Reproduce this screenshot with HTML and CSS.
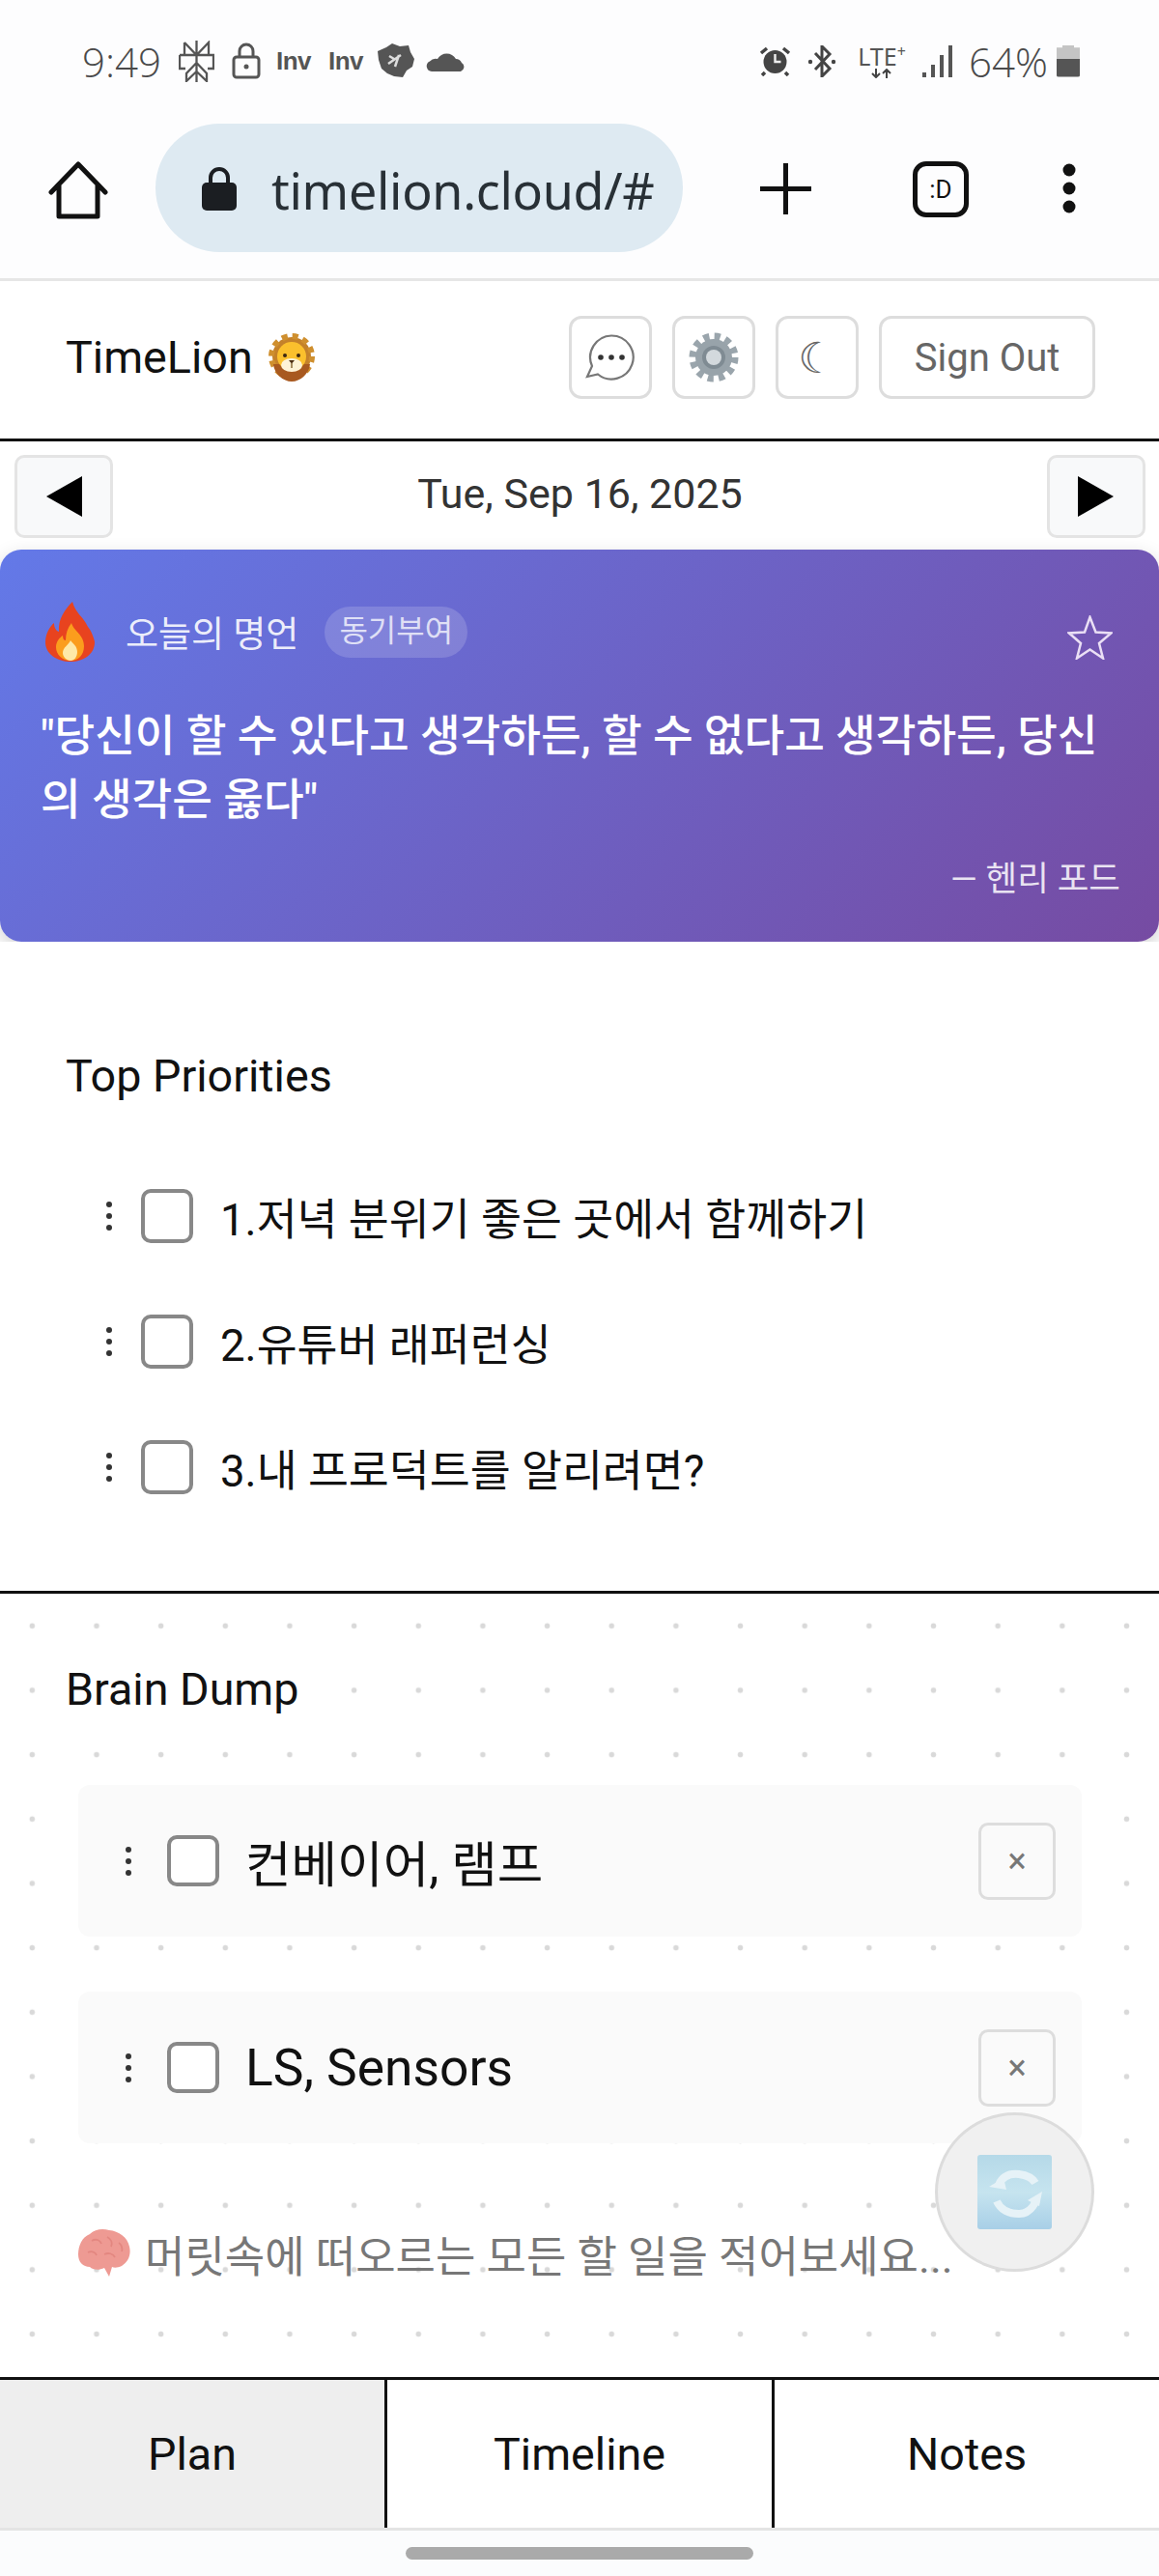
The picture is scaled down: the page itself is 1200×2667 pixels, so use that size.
FILE: index.html
```html
<!DOCTYPE html>
<html lang="ko">
<head>
<meta charset="utf-8">
<title>TimeLion</title>
<link rel="stylesheet" href="styles.css">
</head>
<body>
<div class="chrome">
  <div class="status">
    <div class="status-left">
      <span class="time">9:49</span>
      <svg class="ic-perp" viewBox="0 0 37 43"><path d="M18.500 0V43M6 2l12.500 13L31 2V15M6 2V15M1 15h35v14h-6M1 15v14h6M18.500 23L8 34v8l10.500-10M18.500 23L29 34v8L18.500 32" fill="none" stroke="#555" stroke-width="2.300"/></svg>
      <svg class="ic-lock" viewBox="0 0 30 38"><path d="M8 15V9a7 7 0 0 1 14 0v6" fill="none" stroke="#555" stroke-width="3"/><rect x="2" y="15" width="26" height="21" rx="3" fill="none" stroke="#555" stroke-width="3"/><circle cx="15" cy="25" r="2.500" fill="#555"/></svg>
      <span class="inv">Inv</span>
      <span class="inv">Inv</span>
      <svg class="ic-globe" viewBox="0 0 40 36"><path d="M2 8l9-4 6-4 8 3 9-1 2 7 4 7-2 8-6 4-4 7-9-1-7-3-6-5-3-9z" fill="#555"/><path d="M13 21l13-9M24 12l-4 12M14 13l5 3" stroke="#ddd" stroke-width="2.500" fill="none"/></svg>
      <svg class="ic-cloud" viewBox="0 0 41 22"><path d="M6 22a5.500 5.500 0 0 1-2-10.500 8 8 0 0 1 8-2.500 11 11 0 0 1 19 0 7 7 0 0 1 6 4 5 5 0 0 1-1 9z" fill="#555"/></svg>
    </div>
    <div class="status-right">
      <svg class="ic-alarm" viewBox="0 0 33 31"><circle cx="16.500" cy="16" r="12" fill="#444"/><path d="M16.500 8v8h6" stroke="#eee" stroke-width="2.400" fill="none"/><path d="M2 7l6-5M31 7l-6-5M6 27l-3 3M27 27l3 3" stroke="#444" stroke-width="3.500"/></svg>
      <svg class="ic-bt" viewBox="0 0 30 33"><path d="M8 8l15 16-8 8V1l8 8L8 25" fill="none" stroke="#444" stroke-width="3"/><circle cx="3" cy="17" r="2.200" fill="#444"/><circle cx="27" cy="17" r="2.200" fill="#444"/></svg>
      <span class="lte"><span class="lte-top">LTE<sup class="lte-plus">+</sup></span><svg class="ic-arrows" viewBox="0 0 24 10"><path d="M6 0v9M2 5l4 4 4-4M17 10V1M13 5l4-4 4 4" stroke="#444" stroke-width="2" fill="none"/></svg></span>
      <svg class="ic-signal" viewBox="0 0 32 33"><rect x="0" y="28" width="4" height="5" fill="#555"/><rect x="9" y="20" width="4" height="13" fill="#555"/><rect x="18" y="10" width="4" height="23" fill="#555"/><rect x="27" y="0" width="4" height="33" fill="#555"/></svg>
      <span class="pct">64%</span>
      <span class="battery"></span>
    </div>
  </div>
  <div class="urlbar">
    <svg class="ic-home" viewBox="0 0 62 60"><path d="M3 32L31 3l28 29M11 25v32h40V25" fill="none" stroke="#111" stroke-width="5" stroke-linejoin="round" stroke-linecap="round"/></svg>
    <div class="pill">
      <svg class="ic-urllock" viewBox="0 0 38 46"><path d="M10 19v-7a9 9 0 0 1 18 0v7" fill="none" stroke="#1b1e22" stroke-width="4"/><rect x="1" y="17" width="36" height="29" rx="5" fill="#1b1e22"/></svg>
      <span class="url">timelion.cloud/#</span>
    </div>
    <svg class="ic-plus" viewBox="0 0 53 53"><path d="M26.500 0v53M0 26.500h53" stroke="#111" stroke-width="5"/></svg>
    <span class="tabcount">:D</span>
    <svg class="ic-more" viewBox="0 0 14 52"><circle cx="7" cy="7" r="6.500" fill="#111"/><circle cx="7" cy="26" r="6.500" fill="#111"/><circle cx="7" cy="45" r="6.500" fill="#111"/></svg>
  </div>
</div>

<header class="app-header">
  <div class="brand">TimeLion
    <svg class="ic-lion" viewBox="0 0 48 52"><circle cx="24" cy="25" r="20" fill="#c4812a"/><circle cx="24" cy="25" r="21" fill="none" stroke="#cf8f2e" stroke-width="6" stroke-dasharray="6 5"/><path d="M5 33c1 10 10 18 19 18s18-8 19-18z" fill="#a8591f"/><ellipse cx="24" cy="25" rx="15" ry="15" fill="#fbc02d"/><ellipse cx="24" cy="34" rx="11" ry="7" fill="#fff3d6"/><circle cx="17" cy="24" r="2" fill="#3d2610"/><circle cx="31" cy="24" r="2" fill="#3d2610"/><path d="M21 29h6l-3 3.500z" fill="#4a2c10"/><path d="M24 32v5" stroke="#8a6a3a" stroke-width="1.500"/></svg>
  </div>
  <div class="header-actions">
    <button class="hbtn"><svg class="ic-chat" viewBox="0 0 52 48"><path d="M27 1.500a22.500 22.500 0 1 1-14 40L2 44l5-11A22.500 22.500 0 0 1 27 1.500z" fill="#fff" stroke="#777" stroke-width="2.200"/><circle cx="16" cy="24" r="2.800" fill="#333"/><circle cx="27" cy="24" r="2.800" fill="#333"/><circle cx="38" cy="24" r="2.800" fill="#333"/></svg></button>
    <button class="hbtn"><svg class="ic-gear" viewBox="0 0 52 52"><circle cx="26" cy="26" r="21.500" fill="none" stroke="#9aa5ac" stroke-width="8" stroke-dasharray="6 5.260"/><circle cx="26" cy="26" r="19" fill="#98a3aa"/><circle cx="26" cy="26" r="12" fill="#7f8b93"/><circle cx="26" cy="26" r="8" fill="#d3d9dd"/></svg></button>
    <button class="hbtn moon">☾</button>
    <button class="hbtn signout">Sign Out</button>
  </div>
</header>

<nav class="datenav">
  <button class="navbtn"><svg class="tri" viewBox="0 0 37 42"><path d="M37 0v42L0 21z" fill="#000"/></svg></button>
  <span class="date">Tue, Sep 16, 2025</span>
  <button class="navbtn"><svg class="tri" viewBox="0 0 37 42"><path d="M0 0v42l37-21z" fill="#000"/></svg></button>
</nav>

<section class="quote">
  <div class="quote-head">
    <svg class="ic-flame" viewBox="0 0 51 62"><path d="M28 0c3 12 11 15 16 26 3 3 7 13 7 16 0 12-11 20-25 20S0 54 0 42c0-9 5-17 9-20 0 5 2 8 5 9C13 18 20 8 28 0z" fill="#e8431f"/><path d="M27 22c2 8 13 12 13 24 0 9-6 15-14 15s-15-6-15-14c0-6 4-10 7-12 0 3 1 5 3 5 0-7 2-13 6-18z" fill="#fb9d1d"/><path d="M26 40c3 4 7 6 7 12 0 5-3 9-7 9s-8-4-8-8c0-6 6-8 8-13z" fill="#fee9a8"/></svg>
    <span class="quote-label">오늘의 명언</span>
    <span class="quote-badge">동기부여</span>
    <svg class="ic-star" viewBox="0 0 47 46"><path d="M23.500 2l6 15.500 16 1-12.500 10.500 4 15.500-13.500-9-13.500 9 4-15.500L2 18.500l16-1z" fill="none" stroke="#eadff5" stroke-width="2.500"/></svg>
  </div>
  <p class="quote-text">"당신이 할 수 있다고 생각하든, 할 수 없다고 생각하든, 당신의 생각은 옳다"</p>
  <p class="quote-author">— 헨리 포드</p>
</section>

<section class="priorities">
  <h2 class="section-title">Top Priorities</h2>
  <ul class="prio-list">
    <li class="prio"><span class="grip"><i></i><i></i><i></i></span><span class="check"></span><span>1.저녁 분위기 좋은 곳에서 함께하기</span></li>
    <li class="prio"><span class="grip"><i></i><i></i><i></i></span><span class="check"></span><span>2.유튜버 래퍼런싱</span></li>
    <li class="prio"><span class="grip"><i></i><i></i><i></i></span><span class="check"></span><span>3.내 프로덕트를 알리려면?</span></li>
  </ul>
</section>

<section class="dump">
  <h2 class="section-title dump-title">Brain Dump</h2>
  <div class="dump-list">
    <div class="dump-item"><span class="grip"><i></i><i></i><i></i></span><span class="check"></span><span class="dump-text ko">컨베이어, 램프</span><button class="xbtn">×</button></div>
    <div class="dump-item"><span class="grip"><i></i><i></i><i></i></span><span class="check"></span><span class="dump-text">LS, Sensors</span><button class="xbtn">×</button></div>
  </div>
  <div class="dump-input">
    <svg class="ic-brain" viewBox="0 0 54 50"><path d="M12 5c5-5 13-6 20-4 10 1 19 7 21 17 2 8-1 16-8 20-4 2-8 2-10 1l-3 10-5-9c-6 3-12 2-15-1-7 0-12-5-12-13C0 17 4 8 12 5z" fill="#ee9a93"/><path d="M14 12c5-3 9 0 10 3M30 8c4 2 6 6 4 10M10 24c4-2 8 0 9 3M27 26c4-2 9-1 11 3M42 14c3 2 4 6 3 9" stroke="#e38780" stroke-width="1.800" fill="none"/></svg>
    <span>머릿속에 떠오르는 모든 할 일을 적어보세요...</span>
  </div>
  <button class="fab"><svg class="ic-refresh" viewBox="0 0 77 77"><defs><linearGradient id="rg" x1="0" y1="0" x2="0" y2="1"><stop offset="0" stop-color="#b5d9e8"/><stop offset=".5" stop-color="#c6e4ef"/><stop offset="1" stop-color="#a8cfe7"/></linearGradient></defs><rect width="77" height="77" rx="3" fill="url(#rg)"/><path d="M22 31c4-9 12-12 21-11 8 1 14 4 17 9" fill="none" stroke="#e6f2f7" stroke-width="8"/><path d="M12 33l15-9 3 12z" fill="#e6f2f7"/><path d="M20 48c4 9 13 13 23 13 9 0 14-5 18-14" fill="none" stroke="#e6f2f7" stroke-width="8"/><path d="M67 38l-3 15-12-6z" fill="#e6f2f7"/></svg></button>
</section>

<nav class="tabs">
  <button class="tab active">Plan</button>
  <button class="tab">Timeline</button>
  <button class="tab">Notes</button>
</nav>
<div class="gesture"><span class="gesture-bar"></span></div>
</body>
</html>
```
FILE: styles.css
```css
* { box-sizing: border-box; }
html, body { margin: 0; padding: 0; }
body {
  width: 1200px; height: 2667px; overflow: hidden; background: #fff; color: #111;
  font-family: Roboto, "Noto Sans CJK KR", sans-serif;
}
button { font-family: inherit; padding: 0; margin: 0; }
h2, p, ul { margin: 0; padding: 0; }

.chrome { height: 291px; background: #fdfdfe; border-bottom: 3px solid #e6e6e6; }
.status { height: 128px; display: flex; justify-content: space-between; padding: 38px 82px 0 85px; color: #555; }
.status-left, .status-right { display: flex; align-items: center; height: 50px; }
.time { font: 300 42px "Open Sans", sans-serif; width: 100px; color: #4a4a4a; }
.ic-perp { width: 37px; height: 43px; }
.ic-lock { width: 30px; height: 38px; margin-left: 18px; }
.inv { font: 700 26px "Liberation Sans", sans-serif; letter-spacing: -.5px; margin-left: 16px; width: 38px; color: #555; }
.ic-globe { width: 40px; height: 36px; margin-left: 11px; }
.ic-cloud { width: 41px; height: 22px; margin-left: 12px; }
.ic-alarm { width: 33px; height: 31px; }
.ic-bt { width: 30px; height: 33px; margin-left: 17px; }
.lte { display: flex; flex-direction: column; align-items: center; margin-left: 18px; width: 58px; }
.lte-top { font: 400 25px/25px "Noto Sans", sans-serif; color: #555; }
.lte-plus { font-size: 16px; line-height: 0; }
.ic-arrows { width: 24px; height: 10px; }
.ic-signal { width: 32px; height: 33px; margin-left: 13px; }
.pct { font: 300 42px "Open Sans", sans-serif; margin-left: 16px; color: #4a4a4a; width: 84px; white-space: nowrap; }
.battery { width: 24px; height: 33px; margin-left: 7px; border-radius: 2px; background: linear-gradient(#c4c4c4 0 43%, #555 43%); clip-path: polygon(25% 0, 75% 0, 75% 8%, 100% 8%, 100% 100%, 0 100%, 0 8%, 25% 8%); }

.urlbar { height: 160px; display: flex; align-items: flex-start; padding-left: 50px; }
.ic-home { width: 62px; height: 60px; margin-top: 39px; }
.pill { width: 546px; height: 133px; margin-left: 49px; background: #deeaf2; border-radius: 67px; display: flex; align-items: center; padding-left: 47px; }
.ic-urllock { width: 38px; height: 46px; }
.url { font: 400 52px "Noto Sans", sans-serif; color: #283036; margin-left: 35px; padding-top: 4px; letter-spacing: -.3px; white-space: nowrap; }
.ic-plus { width: 53px; height: 53px; margin-left: 80px; margin-top: 41px; }
.tabcount { width: 58px; height: 58px; margin-left: 105px; margin-top: 39px; border: 5px solid #111; border-radius: 14px; display: flex; align-items: center; justify-content: center; font: 400 26px Roboto, sans-serif; color: #111; }
.ic-more { width: 14px; height: 52px; margin-left: 97px; margin-top: 41px; }

.app-header { height: 166px; border-bottom: 3px solid #111; background: #fff; display: flex; justify-content: space-between; align-items: center; padding: 0 66px 5px 68px; }
.brand { font-size: 46.670px; display: flex; align-items: center; gap: 16px; color: #111; }
.ic-lion { width: 48px; height: 52px; }
.header-actions { display: flex; gap: 21px; }
.hbtn { width: 86px; height: 86px; border: 3px solid #ddd; border-radius: 13px; background: #fff; display: flex; align-items: center; justify-content: center; color: #666; font-size: 40px; }
.signout { width: 224px; font-size: 40px; color: #666; }
.moon { font-family: "DejaVu Sans", sans-serif; font-size: 44px; }
.ic-chat { width: 52px; height: 48px; }
.ic-gear { width: 52px; height: 52px; }

.datenav { height: 112px; display: flex; justify-content: space-between; align-items: flex-start; padding: 14px 14px 0 15px; background: #fff; }
.navbtn { width: 102px; height: 86px; background: #f8f9fa; border: 3px solid #e4e4e4; border-radius: 10px; display: flex; align-items: center; justify-content: center; }
.tri { width: 37px; height: 42px; }
.date { font-size: 43px; line-height: 80px; color: #333; }

.quote { height: 406px; border-radius: 22px; background: linear-gradient(135deg, #6379e8, #764ba2); color: #fff; padding: 54px 42px 0; box-shadow: 0 7px 20px rgba(0,0,0,.18); }
.quote-head { display: flex; align-items: center; height: 62px; }
.ic-flame { width: 51px; height: 62px; margin-left: 5px; }
.quote-label { font-size: 37px; margin-left: 32px; color: rgba(255,255,255,.9); }
.quote-badge { margin-left: 27px; height: 53px; padding: 0 15px; border-radius: 27px; background: rgba(255,255,255,.16); font-size: 32px; line-height: 51px; color: rgba(255,255,255,.75); }
.ic-star { width: 47px; height: 46px; margin-left: auto; margin-right: 6px; margin-top: 12px; }
.quote-text { font-size: 45.300px; font-weight: 500; line-height: 66px; margin-top: 45px; }
.quote-author { text-align: right; font-size: 35.500px; margin-top: 19px; margin-right: -2px; color: rgba(255,255,255,.85); }

.priorities { height: 675px; padding: 104px 0 0 68px; background: #fff; border-bottom: 3px solid #111; }
.section-title { font-size: 46.670px; font-weight: 400; line-height: 70px; color: #111; }
.prio-list { list-style: none; margin: 45px 0 0 25px; }
.prio { display: flex; align-items: center; height: 130px; font-size: 45.600px; color: #111; }
.grip { display: flex; flex-direction: column; gap: 6px; width: 40px; align-items: center; }
.prio .grip { margin-right: 13px; }
.grip i { width: 6px; height: 6px; border-radius: 50%; background: #333; }
.check { width: 54px; height: 56px; border: 4px solid #888; border-radius: 10px; background: #fff; flex: none; margin-right: 28px; }

.dump { height: 811px; position: relative; padding-top: 64px; background: #fff radial-gradient(circle at center, #d9d9d9 0 2.500px, transparent 3.200px) 0 0 / 66.667px 66.667px; }
.dump-title { background: #fff; margin-left: 44px; padding-left: 24px; width: 300px; }
.dump-list { margin: 64px 80px 0 81px; display: flex; flex-direction: column; gap: 57px; }
.dump-item { height: 157px; background: #fafafa; border-radius: 12px; display: flex; align-items: center; padding-left: 32px; }
.dump-item .check { height: 53px; margin-left: 20px; margin-right: 27px; }
.dump-text { font-size: 53.330px; flex: 1; color: #111; }
.dump-text.ko { font-size: 51.700px; }
.xbtn { width: 80px; height: 80px; border: 3px solid #ddd; border-radius: 10px; background: #fafafa; color: #777; font-size: 36px; margin-right: 27px; }
.dump-input { margin: 89px 0 0 81px; display: flex; align-items: center; gap: 15px; font-size: 45px; color: #777; height: 50px; }
.ic-brain { width: 54px; height: 50px; }
.fab { position: absolute; left: 968px; top: 537px; width: 165px; height: 165px; border-radius: 50%; background: #f0f0f0; border: 3px solid #dcdcdc; display: flex; align-items: center; justify-content: center; }
.ic-refresh { width: 77px; height: 77px; }

.tabs { height: 159px; display: flex; border-top: 3px solid #111; border-bottom: 3px solid #e4e4e4; background: #fff; }
.tab { flex: 1; border: 0; border-right: 3px solid #111; background: #fff; font-size: 46.670px; color: #111; }
.tab:last-child { border-right: 0; }
.tab.active { background: #eee; }
.gesture { height: 47px; background: #fbfcfd; display: flex; justify-content: center; padding-top: 17px; }
.gesture-bar { width: 360px; height: 13px; border-radius: 7px; background: #aaa; }
```
